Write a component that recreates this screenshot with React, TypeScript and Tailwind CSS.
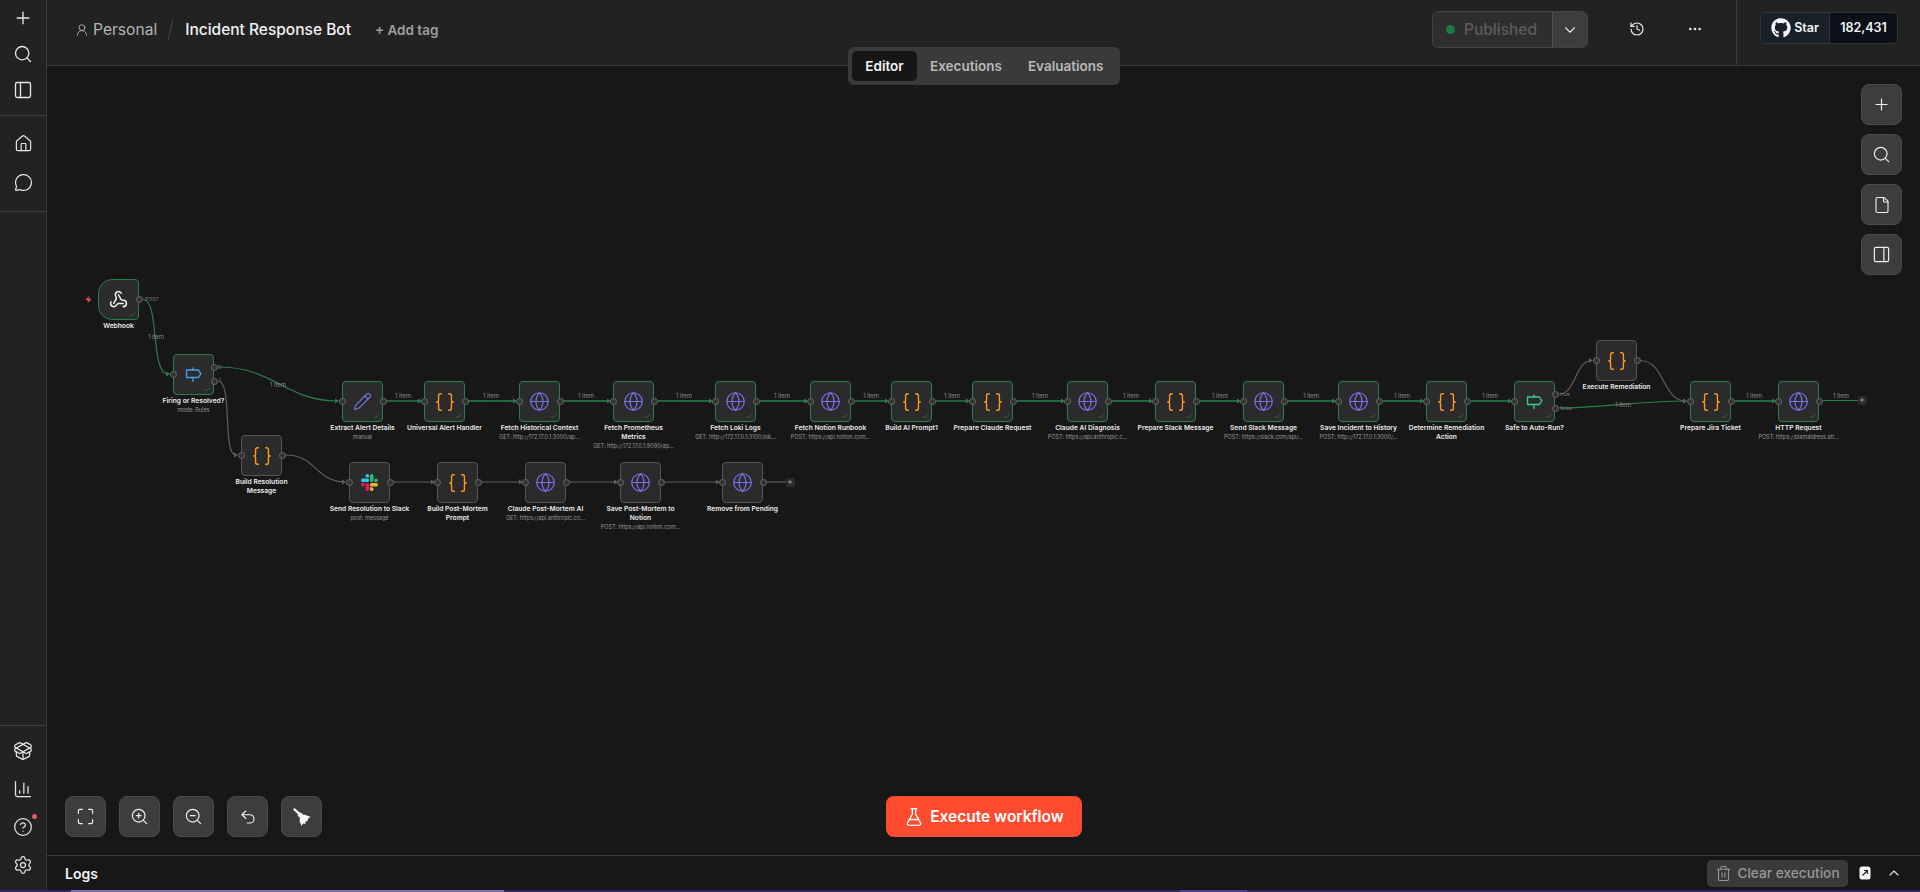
import React from "react";
import {
  Plus, Search, PanelLeft, House, MessageCircle, PackageOpen, ChartColumn, CircleHelp, Settings,
  UserRound, ChevronDown, ChevronUp, History, Ellipsis, File, PanelRight, Maximize, ZoomIn, ZoomOut,
  Undo2, FlaskConical, Trash2, Globe, Braces, Pencil, Webhook, Check, Zap,
} from "lucide-react";
import { FaGithub } from "react-icons/fa";

const OX = 47;
const OY = 66;
const GREEN = "#27804c";
const GREY = "#5f5f5f";

type Kind = "globe" | "code" | "pencil" | "webhook" | "switch" | "if" | "slack";
type NodeDef = { x: number; y: number; kind: Kind; label: string; sub?: string; ok?: boolean };

const nodes: NodeDef[] = [
  { x: 98, y: 279, kind: "webhook", label: "Webhook", ok: true },
  { x: 173, y: 354, kind: "switch", label: "Firing or Resolved?", sub: "mode: Rules", ok: true },
  { x: 342, y: 381, kind: "pencil", label: "Extract Alert Details", sub: "manual", ok: true },
  { x: 424, y: 381, kind: "code", label: "Universal Alert Handler", ok: true },
  { x: 519, y: 381, kind: "globe", label: "Fetch Historical Context", sub: "GET: http://172.17.0.1:3000/ap...", ok: true },
  { x: 613, y: 381, kind: "globe", label: "Fetch Prometheus\nMetrics", sub: "GET: http://172.17.0.1:9090/ap...", ok: true },
  { x: 715, y: 381, kind: "globe", label: "Fetch Loki Logs", sub: "GET: http://172.17.0.1:3100/lok...", ok: true },
  { x: 810, y: 381, kind: "globe", label: "Fetch Notion Runbook", sub: "POST: https://api.notion.com...", ok: true },
  { x: 891, y: 381, kind: "code", label: "Build AI Prompt1", ok: true },
  { x: 972, y: 381, kind: "code", label: "Prepare Claude Request", ok: true },
  { x: 1067, y: 381, kind: "globe", label: "Claude AI Diagnosis", sub: "POST: https://api.anthropic.c...", ok: true },
  { x: 1155, y: 381, kind: "code", label: "Prepare Slack Message", ok: true },
  { x: 1243, y: 381, kind: "globe", label: "Send Slack Message", sub: "POST: https://slack.com/api/...", ok: true },
  { x: 1338, y: 381, kind: "globe", label: "Save Incident to History", sub: "POST: http://172.17.0.1:3000/...", ok: true },
  { x: 1426, y: 381, kind: "code", label: "Determine Remediation\nAction", ok: true },
  { x: 1514, y: 381, kind: "if", label: "Safe to Auto-Run?", ok: true },
  { x: 1596, y: 340, kind: "code", label: "Execute Remediation" },
  { x: 1690, y: 381, kind: "code", label: "Prepare Jira Ticket", ok: true },
  { x: 1778, y: 381, kind: "globe", label: "HTTP Request", sub: "POST: https://blamaldress.atl...", ok: true },
  { x: 241, y: 435, kind: "code", label: "Build Resolution\nMessage" },
  { x: 349, y: 462, kind: "slack", label: "Send Resolution to Slack", sub: "post: message" },
  { x: 437, y: 462, kind: "code", label: "Build Post-Mortem\nPrompt" },
  { x: 525, y: 462, kind: "globe", label: "Claude Post-Mortem AI", sub: "GET: https://api.anthropic.co..." },
  { x: 620, y: 462, kind: "globe", label: "Save Post-Mortem to\nNotion", sub: "POST: https://api.notion.com..." },
  { x: 722, y: 462, kind: "globe", label: "Remove from Pending" },
];

const greenTargets = [
  [383, 424], [464, 519], [559, 613], [654, 715], [756, 810], [851, 891], [932, 972], [1013, 1067],
  [1108, 1155], [1196, 1243], [1284, 1338], [1379, 1426], [1467, 1514], [1731, 1778],
];
const greyTargets = [[390, 437], [478, 525], [566, 620], [661, 722]];

const curves: { d: string; color: string; tip: [number, number] }[] = [
  { d: "M143 299.5C160 299.5 150 374 168 374", color: GREEN, tip: [170, 374] },
  { d: "M218 367C275 367 285 401 338 401", color: GREEN, tip: [339, 401] },
  { d: "M218 381C233 381 222 455 236 455", color: GREY, tip: [238, 455] },
  { d: "M286 455C316 455 316 482 345 482", color: GREY, tip: [346, 482] },
  { d: "M1559 394C1576 394 1575 360.5 1592 360.5", color: GREY, tip: [1593, 360.5] },
  { d: "M1559 408C1600 408 1640 401 1686 401", color: GREEN, tip: [1687, 401] },
  { d: "M1640 360.5C1665 360.5 1662 401 1686 401", color: GREY, tip: [1687, 401] },
];

const itemLabels: [number, number][] = [
  [156, 336], [278, 384], [403, 395], [491, 395], [586, 395], [684, 395], [782, 395], [871, 395], [952, 395],
  [1040, 395], [1131, 395], [1220, 395], [1311, 395], [1402, 395], [1490, 395], [1623, 404], [1754, 395], [1841, 395],
];

const smallLabels: [number, number, string][] = [
  [145, 299, "POST"], [218, 367, "0"], [219, 380, "1"], [1560, 394, "true"], [1560, 408, "false"],
];

function Signpost({ color }: { color: string }) {
  return (
    <svg width="17" height="17" viewBox="0 0 17 17" fill="none" stroke={color} strokeWidth="1.300" strokeLinejoin="round">
      <path d="M8 1.500v2.500M8 11.500v4.500" />
      <path d="M1.500 4H13.500l2.300 3.700-2.300 3.800H1.500z" />
    </svg>
  );
}

function SlackLogo() {
  return (
    <svg width="17" height="17" viewBox="0 0 127 127">
      <path fill="#E01E5A" d="M27.2 80c0 7.3-5.9 13.2-13.2 13.2C6.7 93.2.8 87.3.8 80c0-7.3 5.9-13.2 13.2-13.2h13.2V80zm6.6 0c0-7.3 5.9-13.2 13.2-13.2 7.3 0 13.2 5.9 13.2 13.2v33c0 7.3-5.9 13.2-13.2 13.2-7.3 0-13.2-5.9-13.2-13.2V80z" />
      <path fill="#36C5F0" d="M47 27c-7.3 0-13.2-5.9-13.2-13.2C33.8 6.5 39.7.6 47 .6c7.3 0 13.2 5.9 13.2 13.2V27H47zm0 6.7c7.3 0 13.2 5.9 13.2 13.2 0 7.3-5.9 13.2-13.2 13.2H13.9C6.6 60.1.7 54.2.7 46.9c0-7.3 5.9-13.2 13.2-13.2H47z" />
      <path fill="#2EB67D" d="M99.9 46.9c0-7.3 5.9-13.2 13.2-13.2 7.3 0 13.2 5.9 13.2 13.2 0 7.3-5.9 13.2-13.2 13.2H99.9V46.9zm-6.6 0c0 7.3-5.9 13.2-13.2 13.2-7.3 0-13.2-5.9-13.2-13.2V13.8C66.9 6.5 72.8.6 80.1.6c7.3 0 13.2 5.9 13.2 13.2v33.1z" />
      <path fill="#ECB22E" d="M80.1 99.8c7.3 0 13.2 5.9 13.2 13.2 0 7.3-5.9 13.2-13.2 13.2-7.3 0-13.2-5.9-13.2-13.2V99.8h13.2zm0-6.6c-7.3 0-13.2-5.9-13.2-13.2 0-7.3 5.9-13.2 13.2-13.2h33.1c7.3 0 13.2 5.9 13.2 13.2 0 7.3-5.9 13.2-13.2 13.2H80.1z" />
    </svg>
  );
}

function Broom() {
  return (
    <svg width="20" height="20" viewBox="0 0 20 20" fill="#f7f7f7">
      <path d="M1 2.500L2.500 1 9 6.500 7 8.500z" />
      <path d="M5.500 8.500L9 5.500 12 8.500 8.500 11.500z" />
      <path d="M8 11.200L12 7.600 18.500 9.800 16 11.800 15.500 14 13.500 14.500 13.300 17 11 16.500 9.500 19 7.500 14z" />
    </svg>
  );
}

function NodeIcon({ kind }: { kind: Kind }) {
  switch (kind) {
    case "globe":
      return <Globe size={21} strokeWidth={1.4} color="#7a70e8" />;
    case "code":
      return <Braces size={22} strokeWidth={1.5} color="#ff9922" />;
    case "pencil":
      return <Pencil size={19} strokeWidth={1.3} color="#7d80ea" />;
    case "webhook":
      return <Webhook size={19} strokeWidth={1.9} color="#f2f2f2" />;
    case "switch":
      return <Signpost color="#4aa0f0" />;
    case "if":
      return <Signpost color="#2fd08c" />;
    case "slack":
      return <SlackLogo />;
  }
}

function Handle({ x, y }: { x: number; y: number }) {
  return (
    <div
      className="absolute w-[7px] h-[7px] rounded-full bg-[#333333] border border-[#6a6a6a]"
      style={{ left: x - 3.5, top: y - 3.5 }}
    />
  );
}

function FlowNode({ n }: { n: NodeDef }) {
  const border = n.ok ? "border-[#27804c]" : "border-[#555555]";
  const shape = n.kind === "webhook" ? "rounded-l-[14px] rounded-r-[4px]" : "rounded-[4px]";
  return (
    <div className="absolute w-[41px] h-[41px]" style={{ left: n.x - OX, top: n.y - OY }}>
      <div className={`w-full h-full flex items-center justify-center bg-[#2b2b2b] border ${border} ${shape}`}>
        <NodeIcon kind={n.kind} />
      </div>
      {n.ok && <Check size={7} strokeWidth={2} color="#2f9a5c" className="absolute right-[3px] bottom-[2px]" />}
      <div className="absolute left-[-40px] right-[-40px] top-[43px] text-center">
        <div className="text-[6.7px] leading-[9px] font-semibold text-[#ececec] whitespace-pre-line">{n.label}</div>
        {n.sub && <div className="text-[5.5px] leading-[9px] text-[#979797] whitespace-nowrap">{n.sub}</div>}
      </div>
    </div>
  );
}

function CanvasAddButton({ x, y }: { x: number; y: number }) {
  return (
    <div
      className="absolute w-[9px] h-[9px] rounded-[2px] bg-[#2b2b2b] flex items-center justify-center"
      style={{ left: x - OX - 4.5, top: y - OY - 4.5 }}
    >
      <Plus size={6} strokeWidth={2.5} color="#c8c8c8" />
    </div>
  );
}

function Arrow({ x, y, color }: { x: number; y: number; color: string }) {
  return <polygon points={`${x - 4},${y - 2.6} ${x},${y} ${x - 4},${y + 2.6}`} fill={color} />;
}

function Canvas() {
  return (
    <div className="relative flex-1 overflow-hidden bg-[#171717] bg-[radial-gradient(#2d2d2d_0.6px,transparent_0.7px)] bg-[size:8.4px_8.4px]">
      <svg className="absolute inset-0 w-full h-full" fill="none">
        <g transform={`translate(${-OX} ${-OY})`}>
          {greenTargets.map(([a, b]) => (
            <g key={a}>
              <path d={`M${a + 4} 401H${b - 5}`} stroke={GREEN} strokeWidth="1.4" />
              <Arrow x={b - 2} y={401} color={GREEN} />
            </g>
          ))}
          {greyTargets.map(([a, b]) => (
            <g key={a}>
              <path d={`M${a + 4} 482H${b - 5}`} stroke={GREY} strokeWidth="1.2" />
              <Arrow x={b - 2} y={482} color={GREY} />
            </g>
          ))}
          {curves.map((c) => (
            <g key={c.d}>
              <path d={c.d} stroke={c.color} strokeWidth="1.2" />
              <Arrow x={c.tip[0]} y={c.tip[1]} color={c.color} />
            </g>
          ))}
          <path d="M766 482H786" stroke={GREY} strokeWidth="1.2" />
          <path d="M1823 400.500H1858" stroke={GREEN} strokeWidth="1.2" />
        </g>
      </svg>

      {nodes.map((n) => (
        <FlowNode key={n.label} n={n} />
      ))}

      {nodes.map((n) => {
        const ports: [number, number][] = [];
        if (n.kind === "webhook") ports.push([n.x + 41, n.y + 20.5]);
        else if (n.kind === "switch")
          ports.push([n.x, n.y + 20], [n.x + 41, 367], [n.x + 41, 381]);
        else if (n.kind === "if") ports.push([n.x, n.y + 20], [n.x + 41, 394], [n.x + 41, 408]);
        else ports.push([n.x, n.y + 20], [n.x + 41, n.y + 20]);
        return ports.map(([x, y]) => <Handle key={`${n.label}-${x}-${y}`} x={x - OX} y={y - OY} />);
      })}

      <CanvasAddButton x={790} y={482} />
      <CanvasAddButton x={1862} y={400} />

      <Zap size={7} fill="#e05545" color="#e05545" className="absolute" style={{ left: 85 - OX, top: 296 - OY }} />

      {itemLabels.map(([x, y]) => (
        <span
          key={`${x}-${y}`}
          className="absolute -translate-x-1/2 -translate-y-1/2 text-[6px] leading-[7px] text-[#8a8a8a] whitespace-nowrap"
          style={{ left: x - OX, top: y - OY }}
        >
          1 item
        </span>
      ))}
      {smallLabels.map(([x, y, t]) => (
        <span
          key={t}
          className="absolute -translate-y-1/2 text-[5.2px] leading-[6px] text-[#7d7d7d]"
          style={{ left: x - OX, top: y - OY }}
        >
          {t}
        </span>
      ))}

      {/* right-hand tools */}
      <div className="absolute right-[18px] top-[18px] flex flex-col gap-[9px]">
        <ToolButton><Plus size={19} strokeWidth={1.5} /></ToolButton>
        <ToolButton><Search size={19} strokeWidth={1.5} /></ToolButton>
        <ToolButton><File size={18} strokeWidth={1.5} /></ToolButton>
        <ToolButton><PanelRight size={19} strokeWidth={1.5} /></ToolButton>
      </div>

      {/* lower-left tools */}
      <div className="absolute left-[18px] bottom-[18px] flex gap-[13px]">
        <ToolButton><Maximize size={19} strokeWidth={1.5} /></ToolButton>
        <ToolButton><ZoomIn size={19} strokeWidth={1.5} /></ToolButton>
        <ToolButton><ZoomOut size={19} strokeWidth={1.5} /></ToolButton>
        <ToolButton><Undo2 size={18} strokeWidth={1.5} /></ToolButton>
        <ToolButton><Broom /></ToolButton>
      </div>

      {/* execute */}
      <div className="absolute left-[839px] bottom-[18px] w-[196px] h-[41px] rounded-[8px] bg-[#ff4b30] flex items-center justify-center gap-[6px] text-white text-[15.5px] font-semibold">
        <FlaskConical size={20} strokeWidth={1.6} />
        <span>Execute workflow</span>
      </div>
    </div>
  );
}

function ToolButton({ children }: { children: React.ReactNode }) {
  return (
    <div className="w-[41px] h-[41px] rounded-[8px] bg-[#3d3d3d] border border-[#4a4a4a] flex items-center justify-center text-[#f0f0f0]">
      {children}
    </div>
  );
}

function SideIcon({ tall, children }: { tall?: boolean; children: React.ReactNode }) {
  return (
    <div className={`${tall ? "h-[38px]" : "h-[36px]"} flex items-center justify-center text-[#e6e6e6]`}>{children}</div>
  );
}

function Sidebar() {
  return (
    <aside className="w-[47px] shrink-0 h-full bg-[#222222] border-r border-[#3a3a3a] flex flex-col">
      <div className="h-[116px] border-b border-[#3f3f3f] flex flex-col">
        <SideIcon><Plus size={20} strokeWidth={1.6} /></SideIcon>
        <SideIcon><Search size={20} strokeWidth={1.6} /></SideIcon>
        <SideIcon><PanelLeft size={20} strokeWidth={1.6} /></SideIcon>
      </div>
      <div className="h-[96px] pt-[8px] gap-[1px] border-b border-[#3f3f3f] flex flex-col">
        <SideIcon tall><House size={19} strokeWidth={1.5} /></SideIcon>
        <SideIcon tall><MessageCircle size={19} strokeWidth={1.5} /></SideIcon>
      </div>
      <div className="flex-1" />
      <div className="relative border-t border-[#3f3f3f] pt-[6px] pb-[6px] flex flex-col">
        <SideIcon tall><PackageOpen size={20} strokeWidth={1.5} /></SideIcon>
        <SideIcon tall><ChartColumn size={20} strokeWidth={1.5} /></SideIcon>
        <SideIcon tall><CircleHelp size={20} strokeWidth={1.5} /></SideIcon>
        <SideIcon tall><Settings size={20} strokeWidth={1.5} /></SideIcon>
        <span className="absolute left-[32px] top-[88px] w-[5px] h-[5px] rounded-full bg-[#f0566a]" />
      </div>
    </aside>
  );
}

function Header() {
  return (
    <header className="relative h-[66px] shrink-0 bg-[#222222] border-b border-[#3a3a3a] flex items-start">
      <div className="flex items-center h-[60px] pl-[28px]">
        <UserRound size={14} strokeWidth={1.5} color="#b5b5b5" />
        <span className="ml-[4px] text-[15.6px] text-[#b4b4b4]">Personal</span>
        <span className="ml-[13px] mr-[14px] w-px h-[20px] bg-[#4a4a4a] rotate-[14deg]" />
        <span className="text-[15.5px] font-medium text-[#f2f2f2]">Incident Response Bot</span>
        <span className="ml-[24px] text-[13.5px] font-semibold text-[#9e9e9e]">+ Add tag</span>
      </div>
      <div className="flex-1" />
      <div className="flex items-start h-full">
        <div className="mt-[11px] flex h-[37px] w-[156px] rounded-[6px] border border-[#434343] overflow-hidden">
          <div className="w-[119px] bg-[#2e2e2e] flex items-center pl-[13px] gap-[9px] text-[15.5px] font-medium text-[#5c5c5c]">
            <span className="w-[9px] h-[9px] rounded-full bg-[#1d7a44]" />
            Published
          </div>
          <div className="flex-1 bg-[#3d3d3d] border-l border-[#4f4f4f] flex items-center justify-center">
            <ChevronDown size={18} strokeWidth={1.5} color="#e6e6e6" />
          </div>
        </div>
        <div className="w-[58px] ml-[20px] h-[58px] flex items-center justify-center">
          <History size={16} strokeWidth={1.8} color="#e6e6e6" />
        </div>
        <div className="w-[58px] h-[58px] flex items-center justify-center">
          <Ellipsis size={16} color="#e6e6e6" />
        </div>
        <div className="ml-[12px] h-full w-px bg-[#3a3a3a]" />
        <div className="ml-[23px] mr-[22px] mt-[12px] flex h-[32px] w-[138px] rounded-[5px] border border-[#30363d] overflow-hidden text-[12.5px] font-semibold text-[#f0f6fc]">
          <div className="w-[69px] bg-[#1a2027] flex items-center justify-center gap-[3px] border-r border-[#30363d]">
            <FaGithub size={20} />
            <span>Star</span>
          </div>
          <div className="flex-1 bg-[#0d1117] flex items-center justify-center">182,431</div>
        </div>
      </div>
      <div className="absolute left-[801px] top-[47px] w-[272px] h-[38px] z-10 rounded-[6px] bg-[#3a3a3a] flex items-center p-[4px] text-[13.5px] font-semibold text-[#b8b8b8]">
        <div className="w-[65px] h-[30px] rounded-[5px] bg-[#161616] text-[#f5f5f5] flex items-center justify-center">Editor</div>
        <div className="ml-[13px]">Executions</div>
        <div className="ml-[26px]">Evaluations</div>
      </div>
    </header>
  );
}

function LogsBar() {
  return (
    <div className="h-[35px] shrink-0 bg-[#171717] border-t border-[#3a3a3a] flex items-center pl-[18px] pr-[18px]">
      <span className="text-[14px] font-semibold text-[#f2f2f2]">Logs</span>
      <div className="flex-1" />
      <div className="w-[141px] h-[27px] rounded-[5px] bg-[#3a3a3a] flex items-center justify-center gap-[5px] text-[13.7px] font-medium text-[#979797]">
        <Trash2 size={17} strokeWidth={1.5} />
        Clear execution
      </div>
      <svg width="12" height="14" viewBox="0 0 12 14" className="ml-[11px]">
        <rect x="0.5" y="0.5" width="11" height="13" rx="2.5" fill="#f5f5f5" />
        <path d="M3.500 9.500L8 5M5 4.500h3.500V8" stroke="#222222" strokeWidth="1.200" fill="none" />
      </svg>
      <ChevronUp size={16} strokeWidth={1.6} color="#e6e6e6" className="ml-[15px]" />
    </div>
  );
}

export default function App() {
  return (
    <div className="w-[1920px] h-[892px] overflow-hidden flex flex-col bg-[#171717] font-[Inter,sans-serif]">
      <div className="flex h-[890px]">
        <Sidebar />
        <main className="flex-1 min-w-0 flex flex-col">
          <Header />
          <Canvas />
          <LogsBar />
        </main>
      </div>
      <div className="h-[2px] flex">
        <div className="w-[71px] bg-[#38265f]" />
        <div className="w-[433px] bg-[#8170b4]" />
        <div className="w-[676px] bg-[#38265f]" />
        <div className="w-[67px] bg-[#54398f]" />
        <div className="flex-1 bg-[#38265f]" />
      </div>
    </div>
  );
}
